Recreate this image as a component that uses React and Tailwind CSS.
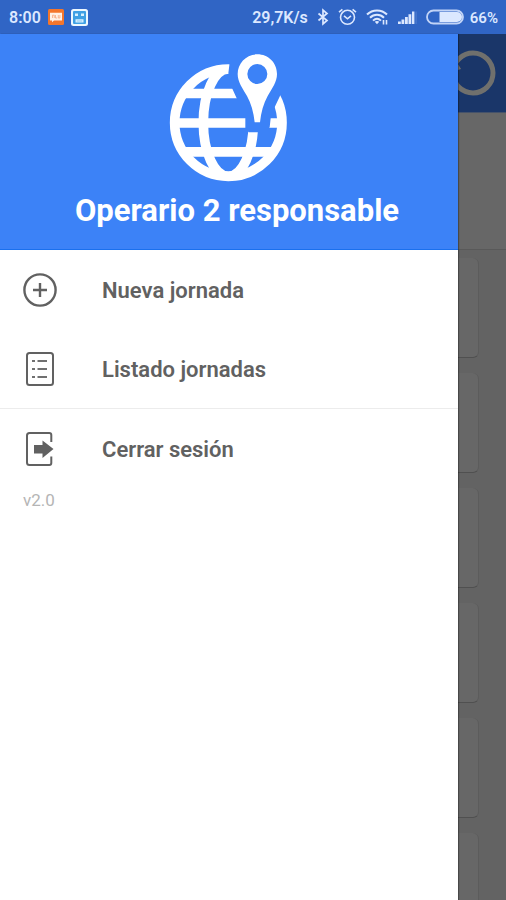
import React from "react";

function BluetoothIcon() {
  return (
    <svg width="12" height="18" viewBox="0 0 12 18" fill="none" stroke="currentColor" strokeWidth="1.7" aria-hidden="true">
      <path d="M1.5 5.5 L10 12.5 L6 16 V2 L10 5.5 L1.5 12.5" />
    </svg>
  );
}

function AlarmIcon() {
  return (
    <svg width="19" height="18" viewBox="0 0 19 18" fill="none" stroke="currentColor" strokeWidth="1.6" aria-hidden="true">
      <circle cx="9.5" cy="9.3" r="7" />
      <path d="M6 7.8 L9.5 10.8 L13 7.8" />
      <path d="M1 4.2 L4.4 1.3 M18 4.2 L14.6 1.3" />
    </svg>
  );
}

function WifiIcon() {
  return (
    <svg width="22" height="18" viewBox="0 0 22 18" fill="none" stroke="currentColor" strokeWidth="2" aria-hidden="true">
      <path d="M1 6.5 C6.5 1 15.5 1 21 6.5" />
      <path d="M4 9.7 C8 5.8 14 5.8 18 9.7" />
      <path d="M7 12.6 C9.5 10.2 12.5 10.2 15 12.6" />
      <path d="M8.8 13.8 L11 16.3 L13.2 13.8 C12 12.8 10 12.8 8.8 13.8 Z" fill="currentColor" stroke="none" />
      <path d="M17.500 12 V16.500 M20.500 12 V16.500" strokeWidth="1.6" />
    </svg>
  );
}

function SignalIcon() {
  return (
    <svg width="20" height="18" viewBox="0 0 20 18" fill="currentColor" aria-hidden="true">
      <path d="M1 13.5h2.8V16H1z M4.5 11.5h2.8V16H4.5z M8 9h2.8v7H8z M11.5 6.3h2.8V16h-2.8z M15 3.5h2.4V16H15z" />
      <path d="M18.6 3.5h1V16h-1z" opacity="0.2" />
    </svg>
  );
}

function BatteryIcon() {
  return (
    <svg width="38" height="16" viewBox="0 0 38 16" fill="none" aria-hidden="true">
      <rect x="1" y="1.5" width="36" height="13" rx="6.5" stroke="currentColor" strokeWidth="1.8" opacity="0.85" />
      <path d="M13.500 3 H31 A5 5 0 0 1 31 13 H13.500 Z" fill="currentColor" />
    </svg>
  );
}

function MessageBadge() {
  return (
    <svg width="16" height="16" viewBox="0 0 16 16" aria-hidden="true">
      <rect width="16" height="16" rx="1.5" fill="#f4762c" />
      <path d="M2 3.8h12v7.6H6l-2 1.8v-1.8H2z" fill="#fff1e8" />
      <path d="M4.5 9V6.2h1.8V9 M7.5 6v3h1.6 M10.3 6v3h1.6V6" fill="none" stroke="#f6a880" strokeWidth="0.8" />
    </svg>
  );
}

function AppBadge() {
  return (
    <svg width="17" height="17" viewBox="0 0 17 17" aria-hidden="true">
      <rect width="17" height="17" rx="2.5" fill="#edf8ff" />
      <rect x="2" y="2" width="13" height="13" rx="1" fill="#3fa0e4" />
      <path d="M4 4.500h3v2.500h-3z M10 4.500h3v2.500h-3z M4.5 10.3h8v3.2h-8z" fill="#d8f0ff" />
      <path d="M5.8 12h5.4" stroke="#8cc8f2" strokeWidth="1" />
    </svg>
  );
}

function GlobePinLogo() {
  return (
    <svg width="160" height="150" viewBox="0 0 480 450" fill="none" aria-hidden="true">
      <defs>
        <mask id="pin-gap" maskUnits="userSpaceOnUse" x="0" y="0" width="480" height="450">
          <rect width="480" height="450" fill="white" />
          <path
            d="M243 50 L241 76 L238 100 L250 146 L263 175 L289 230 V264 L299 277 H350 L362 262 L365 235 L374 208 L394 166 L440 50 Z"
            fill="black"
          />
        </mask>
        <clipPath id="globe-disc">
          <circle cx="238" cy="248" r="170" />
        </clipPath>
      </defs>
      <g mask="url(#pin-gap)" stroke="white" strokeWidth="29">
        <circle cx="238" cy="248" r="161" />
        <g clipPath="url(#globe-disc)">
          <ellipse cx="238" cy="248" rx="75" ry="161" />
          <path d="M60 160.500 H420 M60 249 H420 M60 335.500 H420" />
        </g>
      </g>
      <path
        fill="white"
        fillRule="evenodd"
        d="M325 43 C292 43 266 69 266 102 C266 127 281 145 294 168 C306 190 314 216 317 247 H333 C336 216 344 190 356 168 C369 145 384 127 384 102 C384 69 358 43 325 43 Z M325 72 A30 30 0 1 1 325 132 A30 30 0 1 1 325 72 Z"
      />
    </svg>
  );
}

function AddIcon() {
  return (
    <svg width="34" height="34" viewBox="0 0 34 34" fill="none" stroke="currentColor" strokeWidth="2.4" aria-hidden="true">
      <circle cx="17" cy="17" r="15.6" />
      <path d="M10 17 H24 M17 10 V24" />
    </svg>
  );
}

function ListIcon() {
  return (
    <svg width="34" height="34" viewBox="0 0 34 34" fill="none" stroke="currentColor" strokeWidth="2" aria-hidden="true">
      <rect x="4" y="1" width="26" height="32" rx="2.5" />
      <path d="M9 9 H12 M14.500 9 H24 M9 17 H12 M14.500 17 H24 M9 25 H12 M14.500 25 H24" opacity="0.9" />
    </svg>
  );
}

function LogoutIcon() {
  return (
    <svg width="34" height="34" viewBox="0 0 34 34" fill="none" stroke="currentColor" strokeWidth="2" aria-hidden="true">
      <path d="M28.300 10 V3 Q28.300 1 26.300 1 H6.500 Q4 1 4 3.500 V30.500 Q4 33 6.500 33 H26.300 Q28.300 33 28.300 31 V24.500" />
      <path d="M11 13 H19.500 V8.500 L30.500 17 L19.500 26 V21.500 H11 Z" fill="currentColor" stroke="none" />
    </svg>
  );
}

function RefreshIcon() {
  return (
    <svg width="48" height="48" viewBox="0 0 48 48" fill="none" aria-hidden="true">
      <circle cx="15" cy="24" r="20" stroke="currentColor" strokeWidth="5" />
      <path d="M0 15 V21 L3 20 Z" fill="currentColor" />
    </svg>
  );
}

function MenuItem({ icon, label }) {
  return (
    <li>
      <button type="button" className="flex h-[79px] w-full items-center gap-[45px] px-[23px] text-left">
        {icon}
        <span className="pt-[3px] text-[22px] leading-7 font-semibold">{label}</span>
      </button>
    </li>
  );
}

function StatusBar() {
  return (
    <header className="flex h-[34px] shrink-0 items-center justify-between bg-[#3065c5] pr-2 pl-[9px] text-base font-semibold text-[#dce8ff]">
      <div className="flex items-center gap-[7px]">
        <span className="pt-[2px]">8:00</span>
        <MessageBadge />
        <AppBadge />
      </div>
      <div className="flex items-center gap-[9px]">
        <span className="pt-[2px]">29,7K/s</span>
        <BluetoothIcon />
        <AlarmIcon />
        <WifiIcon />
        <SignalIcon />
        <div className="flex items-center gap-[6px]">
          <BatteryIcon />
          <span className="pt-[2px] text-[15px]">66%</span>
        </div>
      </div>
    </header>
  );
}

function DimmedPage() {
  return (
    <div className="flex w-12 shrink-0 flex-col overflow-hidden bg-[#636363]">
      <div className="flex h-[79px] shrink-0 items-center border-b border-[#45526a] bg-[#1a3669] text-[#70706d]">
        <button type="button" aria-label="Actualizar">
          <RefreshIcon />
        </button>
      </div>
      <div className="h-[137px] shrink-0 border-b border-[#595959] bg-[#676767]" />
      <div className="flex flex-col gap-[15px] pt-2 pr-[27px]">
        {[1, 2, 3, 4, 5, 6].map((card) => (
          <div
            key={card}
            className="h-[100px] shrink-0 rounded-r-md border-r border-b border-r-[#5c5c5c] border-b-[#505050] bg-[#676767]"
          />
        ))}
      </div>
    </div>
  );
}

export default function App() {
  return (
    <div className="flex h-screen flex-col overflow-hidden bg-white font-[Roboto,sans-serif]">
      <StatusBar />
      <main className="flex min-h-0 flex-1">
        <nav className="z-10 flex flex-1 flex-col bg-white text-[#616161] shadow-[1px_0_1px_rgba(0,0,0,0.3)]">
          <div className="flex h-[216px] shrink-0 flex-col items-center border-b border-[#1a70ee] bg-[#3c82f7] pt-[6px]">
            <GlobePinLogo />
            <h1 className="pt-px pl-4 text-[31px] leading-10 font-bold text-white">Operario 2 responsable</h1>
          </div>
          <ul className="border-b border-[#ececec]">
            <MenuItem icon={<AddIcon />} label="Nueva jornada" />
            <MenuItem icon={<ListIcon />} label="Listado jornadas" />
          </ul>
          <ul>
            <MenuItem icon={<LogoutIcon />} label="Cerrar sesión" />
          </ul>
          <p className="px-[23px] text-[17px] leading-6 text-[#b5b5b5]">v2.0</p>
        </nav>
        <DimmedPage />
      </main>
    </div>
  );
}
